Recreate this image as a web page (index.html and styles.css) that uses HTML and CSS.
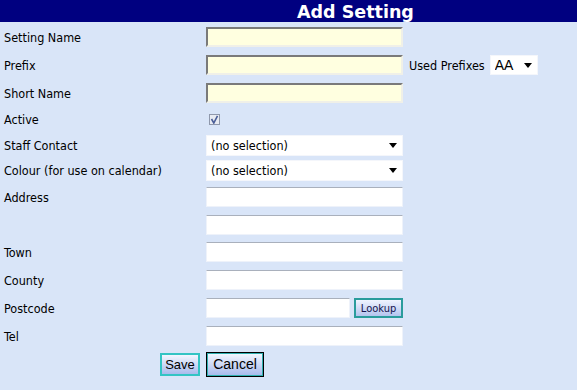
FILE: index.html
```html
<!DOCTYPE html>
<html lang="en">
<head>
    <meta charset="UTF-8">
    <title>Add Setting</title>
    <link rel="stylesheet" href="styles.css">
</head>
<body>
    <div class="page-title">Add Setting</div>
    <form class="setting-form">
        <div class="row r28">
            <label class="lbl">Setting Name</label>
            <input type="text" class="txt req">
        </div>
        <div class="row r28">
            <label class="lbl">Prefix</label>
            <div class="field-line">
                <input type="text" class="txt req">
                <span class="used-label">Used Prefixes</span>
                <div class="sel-wrap prefix-sel">
                    <select class="sel"><option>AA</option></select>
                    <span class="arrow"></span>
                </div>
            </div>
        </div>
        <div class="row r28">
            <label class="lbl">Short Name</label>
            <input type="text" class="txt req">
        </div>
        <div class="row r25">
            <label class="lbl">Active</label>
            <span class="check">
                <svg width="9" height="9" viewBox="0 0 9 9"><path d="M1.5 4 L3.8 8 L7.5 0.8" fill="none" stroke="#4a5e98" stroke-width="1.6"/></svg>
            </span>
        </div>
        <div class="row r26">
            <label class="lbl">Staff Contact</label>
            <div class="sel-wrap">
                <select class="sel"><option>(no selection)</option></select>
                <span class="arrow"></span>
            </div>
        </div>
        <div class="row r25">
            <label class="lbl">Colour (for use on calendar)</label>
            <div class="sel-wrap">
                <select class="sel"><option>(no selection)</option></select>
                <span class="arrow"></span>
            </div>
        </div>
        <div class="row r28">
            <label class="lbl">Address</label>
            <input type="text" class="txt">
        </div>
        <div class="row r27">
            <span class="lbl"></span>
            <input type="text" class="txt">
        </div>
        <div class="row r28">
            <label class="lbl">Town</label>
            <input type="text" class="txt">
        </div>
        <div class="row r28">
            <label class="lbl">County</label>
            <input type="text" class="txt">
        </div>
        <div class="row r28">
            <label class="lbl">Postcode</label>
            <div class="field-line">
                <input type="text" class="txt short">
                <button type="button" class="btn-lookup">Lookup</button>
            </div>
        </div>
        <div class="row r28">
            <label class="lbl">Tel</label>
            <input type="text" class="txt">
        </div>
        <div class="row r28 actions">
            <div class="save-cell"><button type="submit" class="btn btn-save">Save</button></div>
            <div><button type="button" class="btn btn-cancel">Cancel</button></div>
        </div>
    </form>
</body>
</html>
```

FILE: styles.css
```css
body {
    margin: 0;
    padding: 0;
    background-color: #d9e5f8;
    font-family: "DejaVu Sans Condensed", "DejaVu Sans", sans-serif;
    font-size: 12.5px;
    color: #000;
}

.page-title {
    height: 22px;
    background-color: #000080;
    color: #fff;
    font-family: "DejaVu Sans", Verdana, sans-serif;
    font-weight: bold;
    font-size: 17.5px;
    line-height: 24px;
    padding-left: 297px;
    overflow: hidden;
}

.setting-form {
    padding: 1px 0 0 4px;
}

.row {
    display: grid;
    grid-template-columns: 202px 1fr;
    align-items: center;
}

.r25 { height: 25px; }
.r26 { height: 26px; }
.r27 { height: 27px; }
.r28 { height: 28px; }

.lbl {
    white-space: nowrap;
}

.field-line {
    display: flex;
    align-items: center;
}

.txt {
    box-sizing: border-box;
    width: 197px;
    height: 20px;
    margin: 0;
    padding: 0 3px;
    background-color: #fff;
    border: 1px solid #eef2fa;
    border-top-color: #a9b0bc;
    font-family: inherit;
    font-size: 12px;
    outline: none;
}

.txt.req {
    background-color: #ffffe0;
    border: 2px solid #f0f0e8;
    border-top-color: #7a7a7a;
    border-left-color: #7a7a7a;
}

.txt.short {
    width: 144px;
}

.used-label {
    margin-left: 6px;
}

.sel-wrap {
    position: relative;
    width: 197px;
}

.sel {
    -webkit-appearance: none;
    appearance: none;
    box-sizing: border-box;
    width: 100%;
    height: 21px;
    margin: 0;
    padding: 0 0 0 4px;
    background-color: #fff;
    border: 1px solid #f4f6fb;
    border-radius: 0;
    font-family: "DejaVu Sans Condensed", "DejaVu Sans", sans-serif;
    font-size: 12.5px;
    color: #000;
}

.arrow {
    position: absolute;
    right: 6px;
    top: 8px;
    border-left: 4px solid transparent;
    border-right: 4px solid transparent;
    border-top: 5px solid #000;
}

.prefix-sel {
    width: 48px;
    margin-left: 5px;
}

.prefix-sel .sel {
    height: 20px;
    font-family: "Liberation Sans", Arial, sans-serif;
    font-size: 14px;
}

.check {
    display: flex;
    align-items: center;
    justify-content: center;
    box-sizing: border-box;
    width: 11px;
    height: 11px;
    margin-left: 3px;
    border: 1px solid #8f98ac;
    background-color: #e8ebf2;
}

.btn-lookup {
    box-sizing: border-box;
    width: 49px;
    height: 20px;
    margin-left: 4px;
    padding: 0;
    border: 2px solid #2a9c9c;
    background: linear-gradient(#f0f4ff, #b4c4ee);
    font-family: "DejaVu Sans Condensed", "DejaVu Sans", sans-serif;
    font-size: 11px;
    color: #14144e;
}

.save-cell {
    display: flex;
    justify-content: flex-end;
    padding-right: 6px;
}

.btn {
    box-sizing: border-box;
    margin: 0;
    padding: 0;
    background: linear-gradient(#f2f6ff, #a9bbec);
    font-family: "Liberation Sans", Arial, sans-serif;
    font-size: 13px;
    color: #000;
}

.btn-save {
    width: 40px;
    height: 23px;
    border: 2px solid #33c4c4;
}

.btn-cancel {
    width: 58px;
    height: 25px;
    border: 2px solid #2fb0b0;
    outline: 1px solid #000;
    outline-offset: -1px;
    font-size: 14px;
}
```
